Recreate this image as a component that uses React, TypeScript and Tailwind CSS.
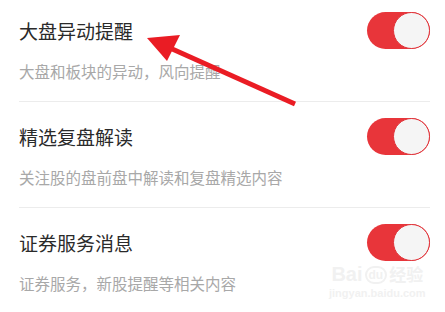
import React from "react";

type Item = { title: string; desc: string };

const items: Item[] = [
  { title: "大盘异动提醒", desc: "大盘和板块的异动，风向提醒" },
  { title: "精选复盘解读", desc: "关注股的盘前盘中解读和复盘精选内容" },
  { title: "证券服务消息", desc: "证券服务，新股提醒等相关内容" },
];

function Toggle() {
  return (
    <div className="flex h-[37px] w-[63px] items-center justify-end rounded-full bg-[#e8353a]">
      <div className="h-[37px] w-[37px] rounded-full border border-[#e03238] bg-[#f5f5f5]" />
    </div>
  );
}

export default function App() {
  return (
    <div
      className="relative h-[312px] w-[445px] overflow-hidden bg-white"
      style={{ fontFamily: '"Noto Sans CJK SC", "Noto Sans", sans-serif' }}
    >
      <div className="-mt-[4px] px-[19px] pr-[15px]">
        {items.map((item) => (
          <div key={item.title} className="border-b border-[#ececec] pt-[16px] pb-[21px]">
            <div className="flex items-center justify-between">
              <span className="text-[19px] leading-[37px] text-[#2a2a2a]">{item.title}</span>
              <Toggle />
            </div>
            <div className="mt-[14px] text-[15.5px] leading-[17px] text-[#a8a8a8]">{item.desc}</div>
          </div>
        ))}
      </div>

      {/* watermark */}
      <div className="pointer-events-none absolute left-[329px] top-[264px] flex flex-col items-center text-[#f1f1f1]">
        <div className="flex items-end gap-[2px] text-[20px] font-bold leading-[20px]" style={{ fontFamily: '"Liberation Sans", sans-serif' }}>
          <span>Bai</span>
          <span className="rounded-full border-2 border-[#f1f1f1] px-[2px] text-[12px] leading-[14px]">du</span>
          <span className="text-[17px]" style={{ fontFamily: '"Noto Sans CJK SC", sans-serif' }}>经验</span>
        </div>
        <div className="mt-[3px] text-[11px] font-bold leading-[12px]" style={{ fontFamily: '"Liberation Sans", sans-serif' }}>
          jingyan.baidu.com
        </div>
      </div>

      {/* annotation arrow */}
      <svg className="pointer-events-none absolute left-0 top-0" width="445" height="312" viewBox="0 0 445 312">
        <line x1="170" y1="48" x2="295" y2="104" stroke="#ea1c24" strokeWidth="5" strokeLinecap="butt" />
        <polygon points="147,38 180,35 167,61" fill="#ea1c24" />
      </svg>
    </div>
  );
}
